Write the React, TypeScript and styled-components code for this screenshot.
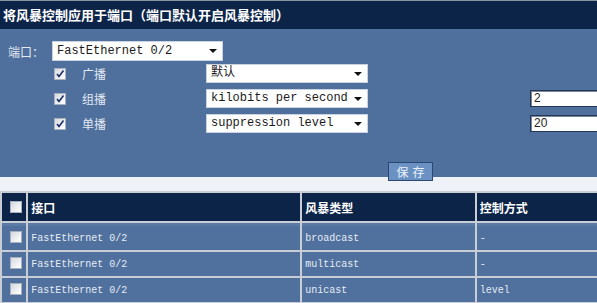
import React from 'react';
import styled, { createGlobalStyle } from 'styled-components';

const GlobalStyle = createGlobalStyle`
  body {
    margin: 0;
    background: #eef1f6;
    overflow: hidden;
  }
`;

const Page = styled.div`
  width: 597px;
  font-family: "Noto Sans CJK SC", "Liberation Sans", sans-serif;
`;

const TitleBar = styled.div`
  height: 28px;
  border-top: 1px solid #8d95a3;
  background: #0c2448;
  color: #ffffff;
  font-size: 13px;
  font-weight: 700;
  line-height: 27px;
  padding-left: 3px;
  white-space: nowrap;
`;

const Panel = styled.div`
  height: 148px;
  background: #4f6f9c;
  display: flex;
  flex-direction: column;
  padding-top: 12px;
  box-sizing: border-box;
`;

const PortRow = styled.div`
  display: flex;
  align-items: center;
  height: 20px;
  padding-left: 8px;
`;

const Label = styled.span<{ $width?: number }>`
  color: #e3e9f3;
  font-size: 12px;
  white-space: nowrap;
  ${p => (p.$width ? `width: ${p.$width}px;` : '')}
`;

const OptionList = styled.div`
  display: flex;
  flex-direction: column;
  gap: 6px;
  margin-top: 3px;
`;

const OptionRow = styled.div`
  display: grid;
  grid-template-columns: 28px 124px 162px 162px 80px;
  align-items: center;
  height: 19px;
  padding-left: 54px;
`;

const Select = styled.div<{ $width: number; $height: number }>`
  position: relative;
  width: ${p => p.$width}px;
  height: ${p => p.$height}px;
  box-sizing: border-box;
  background: #ffffff;
  border: 1px solid #c9d2df;
  color: #1a1a1a;
  font-family: "Liberation Mono", "Noto Sans CJK SC", monospace;
  font-size: 12px;
  line-height: ${p => p.$height - 2}px;
  padding-left: 4px;
  white-space: nowrap;
  overflow: hidden;
`;

const Arrow = styled.span`
  position: absolute;
  right: 5px;
  top: 50%;
  margin-top: -2px;
  width: 0;
  height: 0;
  border-left: 4px solid transparent;
  border-right: 4px solid transparent;
  border-top: 4px solid #111;
`;

const TextInput = styled.div`
  width: 80px;
  height: 17px;
  box-sizing: border-box;
  background: #ffffff;
  border: 1px solid #22365a;
  box-shadow: inset 1px 1px 0 #7b8799;
  color: #222;
  font-family: "Liberation Sans", sans-serif;
  font-size: 12px;
  line-height: 15px;
  padding-left: 3px;
`;

const Check = styled.span`
  display: inline-flex;
  align-items: center;
  justify-content: center;
  width: 12px;
  height: 12px;
  box-sizing: border-box;
  border: 1px solid #a9b1bf;
  background: linear-gradient(135deg, #d4d8de 0%, #f4f5f7 70%, #ffffff 100%);
`;

const SaveRow = styled.div`
  margin-top: 25px;
  padding-left: 388px;
`;

const SaveButton = styled.button`
  width: 45px;
  height: 19px;
  padding: 0;
  background: #6b91c3;
  border: 1px solid #2b4874;
  color: #eef3fa;
  font-family: "Noto Sans CJK SC", sans-serif;
  font-size: 12px;
  letter-spacing: 4px;
  text-indent: 4px;
  line-height: 17px;
`;

const Gap = styled.div`
  height: 14px;
  background: #eef1f6;
`;

const Table = styled.table`
  width: 640px;
  border-collapse: separate;
  border-spacing: 2px;
  background: #c8cdd6;
  table-layout: fixed;
`;

const HeadCell = styled.th<{ $w: number }>`
  width: ${p => p.$w}px;
  height: 28px;
  padding: 0 0 0 3px;
  background: #0c2448;
  color: #ffffff;
  font-size: 12px;
  font-weight: 700;
  text-align: left;
  box-sizing: border-box;
`;

const Cell = styled.td<{ $first?: boolean }>`
  height: 24px;
  padding: 0 0 0 3px;
  background: #50709d;
  color: #e6ecf6;
  font-family: "Liberation Mono", monospace;
  font-size: 10px;
  white-space: nowrap;
  box-sizing: content-box;
  border-top: ${p => (p.$first ? '3px solid #5b7ba7' : 'none')};
`;

const CheckCell = styled(Cell)`
  padding-left: 8px;
`;

const CheckHead = styled(HeadCell)`
  padding-left: 8px;
`;

const CheckMark = () => (
  <svg width="10" height="10" viewBox="0 0 10 10">
    <path d="M2 5 L4 7.5 L8.5 1.5" fill="none" stroke="#1c2f6b" strokeWidth="1.6" />
  </svg>
);

const options = [
  { label: '广播', mode: '默认', value: null as string | null },
  { label: '组播', mode: 'kilobits per second', value: '2' },
  { label: '单播', mode: 'suppression level', value: '20' },
];

const rows = [
  { port: 'FastEthernet 0/2', type: 'broadcast', control: '-' },
  { port: 'FastEthernet 0/2', type: 'multicast', control: '-' },
  { port: 'FastEthernet 0/2', type: 'unicast', control: 'level' },
];

export default function App() {
  return (
    <Page>
      <GlobalStyle />
      <TitleBar>将风暴控制应用于端口（端口默认开启风暴控制）</TitleBar>
      <Panel>
        <PortRow>
          <Label $width={44}>端口：</Label>
          <Select $width={171} $height={20}>
            FastEthernet 0/2
            <Arrow />
          </Select>
        </PortRow>
        <OptionList>
          {options.map(o => (
            <OptionRow key={o.label}>
              <Check>
                <CheckMark />
              </Check>
              <Label>{o.label}</Label>
              <Select $width={162} $height={19}>
                {o.mode}
                <Arrow />
              </Select>
              <span />
              {o.value !== null ? <TextInput>{o.value}</TextInput> : <span />}
            </OptionRow>
          ))}
        </OptionList>
        <SaveRow>
          <SaveButton>保存</SaveButton>
        </SaveRow>
      </Panel>
      <Gap />
      <Table>
        <thead>
          <tr>
            <CheckHead $w={24}>
              <Check />
            </CheckHead>
            <HeadCell $w={270}>接口</HeadCell>
            <HeadCell $w={171}>风暴类型</HeadCell>
            <HeadCell $w={160}>控制方式</HeadCell>
          </tr>
        </thead>
        <tbody>
          {rows.map((r, i) => (
            <tr key={r.type}>
              <CheckCell $first={i === 0}>
                <Check />
              </CheckCell>
              <Cell $first={i === 0}>{r.port}</Cell>
              <Cell $first={i === 0}>{r.type}</Cell>
              <Cell $first={i === 0}>{r.control}</Cell>
            </tr>
          ))}
        </tbody>
      </Table>
    </Page>
  );
}
